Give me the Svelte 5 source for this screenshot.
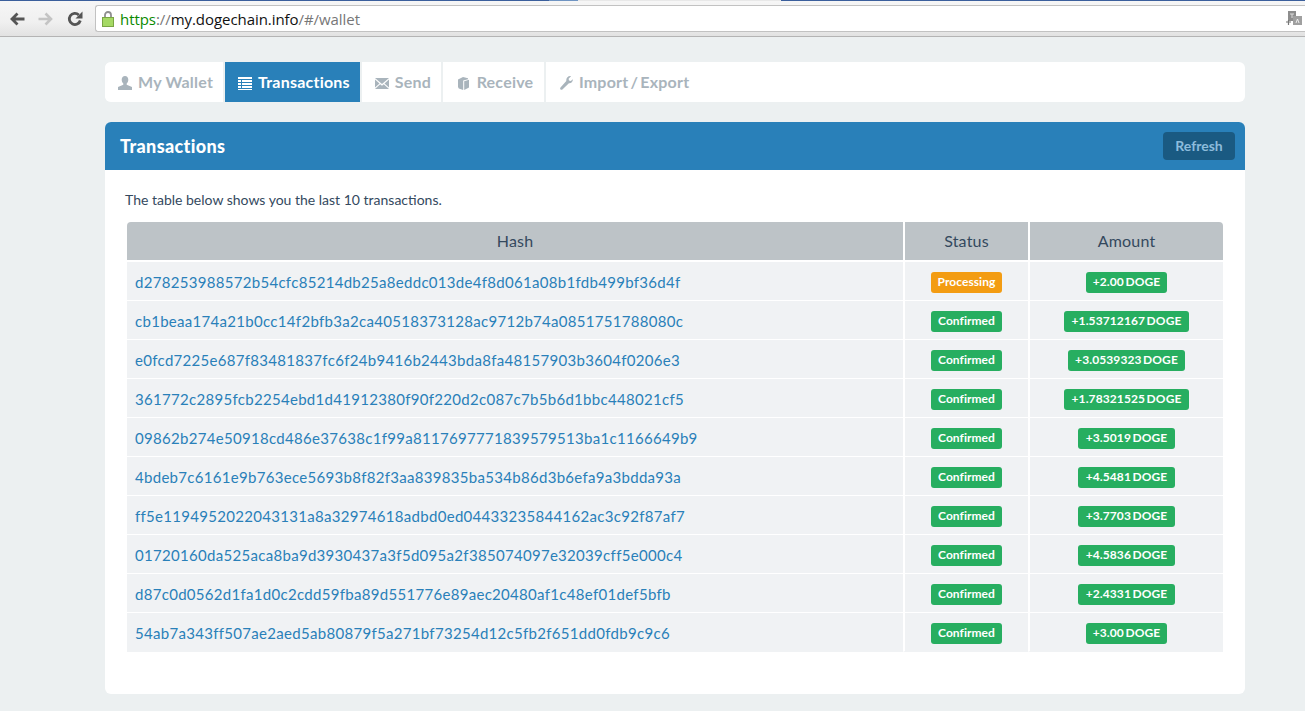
<script>
  const rows = [
    ['d278253988572b54cfc85214db25a8eddc013de4f8d061a08b1fdb499bf36d4f', 'Processing', '+2.00 DOGE'],
    ['cb1beaa174a21b0cc14f2bfb3a2ca40518373128ac9712b74a0851751788080c', 'Confirmed', '+1.53712167 DOGE'],
    ['e0fcd7225e687f83481837fc6f24b9416b2443bda8fa48157903b3604f0206e3', 'Confirmed', '+3.0539323 DOGE'],
    ['361772c2895fcb2254ebd1d41912380f90f220d2c087c7b5b6d1bbc448021cf5', 'Confirmed', '+1.78321525 DOGE'],
    ['09862b274e50918cd486e37638c1f99a8117697771839579513ba1c1166649b9', 'Confirmed', '+3.5019 DOGE'],
    ['4bdeb7c6161e9b763ece5693b8f82f3aa839835ba534b86d3b6efa9a3bdda93a', 'Confirmed', '+4.5481 DOGE'],
    ['ff5e1194952022043131a8a32974618adbd0ed04433235844162ac3c92f87af7', 'Confirmed', '+3.7703 DOGE'],
    ['01720160da525aca8ba9d3930437a3f5d095a2f385074097e32039cff5e000c4', 'Confirmed', '+4.5836 DOGE'],
    ['d87c0d0562d1fa1d0c2cdd59fba89d551776e89aec20480af1c48ef01def5bfb', 'Confirmed', '+2.4331 DOGE'],
    ['54ab7a343ff507ae2aed5ab80879f5a271bf73254d12c5fb2f651dd0fdb9c9c6', 'Confirmed', '+3.00 DOGE']
  ];
</script>

<div class="chrome">
  <div class="tabstrip"><span class="seg a"></span><span class="seg b"></span><span class="seg c"></span></div>
  <div class="toolbar">
    <svg class="tool" viewBox="0 0 16 16" width="16" height="16"><path d="M15.500 8H4M8.500 2.500 3 8l5.500 5.500" fill="none" stroke="#555" stroke-width="2.8"/></svg>
    <svg class="tool" viewBox="0 0 16 16" width="16" height="16"><path d="M.5 8H12M7.500 2.500 13 8l-5.500 5.500" fill="none" stroke="#c4c4c4" stroke-width="2.6"/></svg>
    <svg class="tool" viewBox="0 0 16 16" width="16" height="16"><path d="M13.300 9.500A5.600 5.600 0 1 1 11.800 3.900" fill="none" stroke="#555" stroke-width="2.8"/><path d="M15.500 .5v7h-7z" fill="#555"/></svg>
    <div class="omnibox">
      <svg class="lock" viewBox="0 0 12 16" width="12" height="16"><path d="M3 7V4a3 3 0 0 1 6 0v3" fill="none" stroke="#8f8f8f" stroke-width="1.8"/><rect x=".5" y="6.500" width="11" height="9" fill="#a5d964" stroke="#7aa544"/></svg>
      <span class="url"><span class="scheme">https</span><span class="dim">://</span><span class="host">my.dogechain.info</span><span class="dim">/#/wallet</span></span>
      <svg class="translate" viewBox="0 0 16 15" width="16" height="15"><rect x="2" y="0" width="8" height="10" fill="#8d8d8d"/><rect x="7" y="5" width="9" height="9" fill="#a0a0a0"/><path d="M4 3h4M6 3v4" stroke="#ddd"/><path d="M10 12l1.500-4 1.500 4" stroke="#eee" fill="none"/><path d="M0 11h5M2.500 9v5" stroke="#777" stroke-width="1.2"/></svg>
    </div>
  </div>
</div>

<main class="page">
  <nav class="nav">
    <a class="tab">
      <svg class="ico" viewBox="0 0 14 14" width="14" height="14"><path d="M7 0c2 0 3.300 1.500 3.300 3.700 0 1.500-.7 3-1.600 3.700v1.300L14 11v3H0v-3l5.300-2.300V7.400C4.400 6.700 3.700 5.200 3.700 3.700 3.700 1.500 5 0 7 0z" fill="currentColor"/></svg>
      My Wallet
    </a>
    <a class="tab active">
      <svg class="ico" viewBox="0 0 14 14" width="14" height="14"><path d="M0 1h14v2H0zM0 4h3v2H0zM4 4h10v2H4zM0 7h3v2H0zM4 7h10v2H4zM0 10h3v2H0zM4 10h10v2H4zM0 13h14v1H0z" fill="currentColor"/></svg>
      Transactions
    </a>
    <a class="tab">
      <svg class="ico" viewBox="0 0 14 11" width="14" height="11"><path d="M0 0h14L7 6zM0 1.500 4.500 5.500 0 9.500zM14 1.500 9.500 5.500 14 9.500zM5.200 6.200 7 7.800l1.800-1.600L14 11H0z" fill="currentColor"/></svg>
      Send
    </a>
    <a class="tab receive">
      <svg class="ico" viewBox="0 0 11 13" width="11" height="13"><path d="M0 2.500 5 0l5 1.200v1L5.200 3.500V13L.8 11.500 0 10zM6.200 4.200 11 2.800V10.500L6.200 13z" fill="currentColor"/></svg>
      Receive
    </a>
    <a class="tab import">
      <svg class="ico" viewBox="0 0 14 14" width="14" height="14"><path d="M13.800 3.200c.4 2.300-1.500 4.400-3.900 4.100L3.400 13.500c-1.200 1.100-3.100-.7-1.900-2L7.300 4.900C6.900 2.200 9.300-.4 12 .2L9.600 2.700l.4 1.900 1.800.5z" fill="currentColor"/></svg>
      Import / Export
    </a>
  </nav>

  <section class="panel">
    <header class="head">
      <h2>Transactions</h2>
      <button class="refresh">Refresh</button>
    </header>
    <div class="body">
      <p>The table below shows you the last 10 transactions.</p>
      <table>
        <thead>
          <tr><th>Hash</th><th>Status</th><th>Amount</th></tr>
        </thead>
        <tbody>
          {#each rows as r}
            <tr>
              <td class="hash"><a>{r[0]}</a></td>
              <td class="c"><span class="badge status" class:warn={r[1] === 'Processing'}>{r[1]}</span></td>
              <td class="c"><span class="badge amount">{r[2]}</span></td>
            </tr>
          {/each}
        </tbody>
      </table>
    </div>
  </section>
</main>

<style>
  :global(body) {
    margin: 0;
    background: #ecf0f1;
    font-family: Lato, "Liberation Sans", sans-serif;
    color: #34495e;
    overflow: hidden;
  }
  .chrome { height: 37px; }
  .tabstrip { display: flex; height: 1px; }
  .seg { display: block; height: 1px; }
  .seg.a { width: 578px; background: linear-gradient(90deg, #3b5f9c 0, #3b5f9c 95%, #6f94c2 95%); }
  .seg.b { width: 203px; background: #e8e8e8; }
  .seg.c { flex: 1; background: #3b5f9c; }
  .toolbar {
    height: 36px;
    box-sizing: border-box;
    display: flex;
    align-items: center;
    padding: 0 0 0 9px;
    background: linear-gradient(#f6f6f6, #f0f0f0 60%, #e2e2e2);
    border-bottom: 1px solid #b4b4b4;
  }
  .tool { flex: none; margin-right: 13px; }
  .omnibox {
    flex: 1;
    height: 27px;
    margin-left: -1px;
    box-sizing: border-box;
    background: #fff;
    border: 1px solid #c2c2c2;
    border-right: 0;
    border-radius: 3px 0 0 3px;
    display: flex;
    align-items: center;
    padding: 0 0 0 6px;
    gap: 6px;
  }
  .lock { flex: none; }
  .url { flex: 1; font: 15px "Open Sans", sans-serif; letter-spacing: -.06px; white-space: nowrap; }
  .scheme { color: #0a8a00; }
  .dim { color: #777; }
  .host { color: #111; }
  .translate { flex: none; margin-right: 3px; }

  .page { padding: 25px 60px 0 105px; }
  .nav {
    display: flex;
    gap: 2px;
    height: 40px;
    background: #fff;
    border-radius: 6px;
    overflow: hidden;
  }
  .tab {
    display: flex;
    align-items: center;
    gap: 6px;
    padding: 0 10px 2px 13px;
    font-size: 16px;
    letter-spacing: .22px;
    font-weight: 700;
    color: #a9b4bc;
    background: #fff;
    box-shadow: 2px 0 0 #ecf0f1;
  }
  .tab.active { background: #2980b9; color: #fff; }
  .tab.receive { padding: 0 10.500px 2px 15px; gap: 7.500px; }
  .tab.import { box-shadow: none; word-spacing: -2px; }
  .ico { flex: none; margin-top: 4px; }

  .panel { margin-top: 20px; background: #fff; border-radius: 6px; height: 572px; }
  .head {
    height: 48px;
    box-sizing: border-box;
    display: flex;
    align-items: center;
    justify-content: space-between;
    padding: 0 10px 0 15px;
    background: #2980b9;
    border-radius: 6px 6px 0 0;
  }
  h2 { margin: 0; font-size: 18px; letter-spacing: .35px; font-weight: 900; color: #fff; }
  .refresh {
    width: 72px;
    height: 28px;
    border: 0;
    border-radius: 4px;
    background: #1a5a82;
    color: #8dbcdc;
    font: 700 14px Lato, sans-serif;
    padding: 0 0 2px;
  }
  .body { padding: 21px 22px 0 20px; }
  p { margin: 0 0 14px; font-size: 14px; line-height: 17px; color: #34495e; }
  table {
    width: 1096px;
    margin-left: 2px;
    border-collapse: separate;
    border-spacing: 0;
    table-layout: fixed;
  }
  th {
    height: 38px;
    padding: 0 0 2px;
    background: #bdc3c7;
    font-size: 16px;
    letter-spacing: .2px;
    font-weight: 400;
    color: #34495e;
    box-sizing: border-box;
  }
  th:first-child { width: 776px; border-top-left-radius: 4px; }
  th:nth-child(2) { width: 125px; border-left: 2px solid #fff; }
  th:nth-child(3) { border-left: 2px solid #fff; border-top-right-radius: 4px; }
  tbody::before { content: ""; display: block; height: 2px; }
  td {
    height: 39px;
    box-sizing: border-box;
    padding: 1px 0 0;
    background: #f0f2f4;
    border-bottom: 1px solid #fff;
    font-size: 15px;
    letter-spacing: .3px;
  }
  tr:last-child td { border-bottom-color: #f0f2f4; }
  td + td { border-left: 2px solid #fff; }
  td.hash { padding-left: 8px; }
  td.c { padding-top: 3px; }
  .hash a { color: #2980b9; }
  .c { text-align: center; }
  .badge {
    display: inline-block;
    height: 21px;
    line-height: 20px;
    border-radius: 3px;
    background: #27ae60;
    color: #fff;
    font-size: 12px;
    font-weight: 700;
    vertical-align: middle;
  }
  .status { padding: 0 7.500px; letter-spacing: .05px; }
  .amount { padding: 0 7.200px; letter-spacing: .1px; word-spacing: -1.500px; }
  .badge.warn { background: #f39c12; padding: 0 7px; }
</style>
